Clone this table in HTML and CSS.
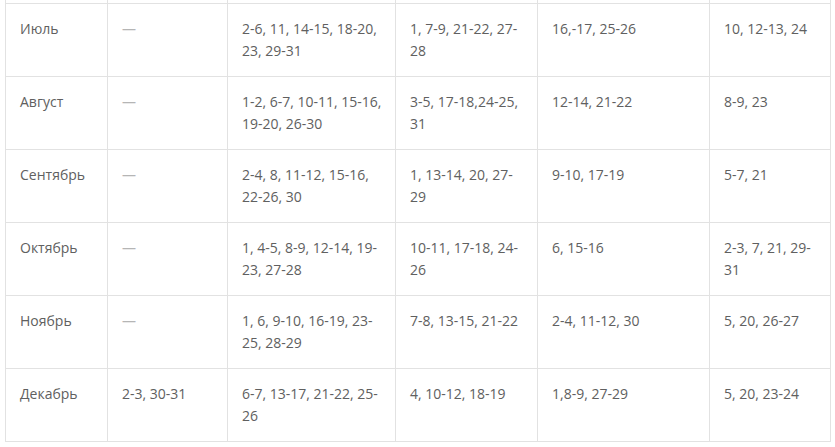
FILE: index.html
```html
<!DOCTYPE html>
<html lang="ru">
<head>
<meta charset="utf-8">
<title>Календарь</title>
<link rel="stylesheet" href="styles.css">
</head>
<body>
<div class="wrap">
<table class="cal">
<colgroup>
<col class="c1"><col class="c2"><col class="c3"><col class="c4"><col class="c5"><col class="c6">
</colgroup>
<tbody>
<tr class="stub"><td></td><td></td><td></td><td></td><td></td><td></td></tr>
<tr><td>Июль</td><td class="dash">—</td><td>2-6, 11, 14-15, 18-20,<br>23, 29-31</td><td>1, 7-9, 21-22, 27-<br>28</td><td>16,-17, 25-26</td><td>10, 12-13, 24</td></tr>
<tr><td>Август</td><td class="dash">—</td><td>1-2, 6-7, 10-11, 15-16,<br>19-20, 26-30</td><td>3-5, 17-18,24-25,<br>31</td><td>12-14, 21-22</td><td>8-9, 23</td></tr>
<tr><td>Сентябрь</td><td class="dash">—</td><td>2-4, 8, 11-12, 15-16,<br>22-26, 30</td><td>1, 13-14, 20, 27-<br>29</td><td>9-10, 17-19</td><td>5-7, 21</td></tr>
<tr><td>Октябрь</td><td class="dash">—</td><td>1, 4-5, 8-9, 12-14, 19-<br>23, 27-28</td><td>10-11, 17-18, 24-<br>26</td><td>6, 15-16</td><td>2-3, 7, 21, 29-<br>31</td></tr>
<tr><td>Ноябрь</td><td class="dash">—</td><td>1, 6, 9-10, 16-19, 23-<br>25, 28-29</td><td>7-8, 13-15, 21-22</td><td>2-4, 11-12, 30</td><td>5, 20, 26-27</td></tr>
<tr><td>Декабрь</td><td>2-3, 30-31</td><td>6-7, 13-17, 21-22, 25-<br>26</td><td>4, 10-12, 18-19</td><td>1,8-9, 27-29</td><td>5, 20, 23-24</td></tr>
</tbody>
</table>
</div>
</body>
</html>
```
FILE: styles.css
```css
html, body {
  margin: 0;
  padding: 0;
  background: #ffffff;
}
.wrap {
  padding-left: 5px;
}
.cal {
  border-collapse: collapse;
  table-layout: fixed;
  width: 825px;
  font-family: "Open Sans", "DejaVu Sans", sans-serif;
  font-size: 14px;
  line-height: 22px;
  color: #606060;
}
.c1 { width: 102px; }
.c2 { width: 120px; }
.c3 { width: 168px; }
.c4 { width: 142px; }
.c5 { width: 172px; }
.c6 { width: 121px; }
.cal td {
  border: 1px solid #e2e2e2;
  padding: 14px 14px;
  vertical-align: top;
  white-space: nowrap;
  height: 44px;
}
.cal .stub td {
  border-top: none;
  padding: 0;
  height: 3px;
}
.cal .dash {
  color: #b5b5b5;
}
```
